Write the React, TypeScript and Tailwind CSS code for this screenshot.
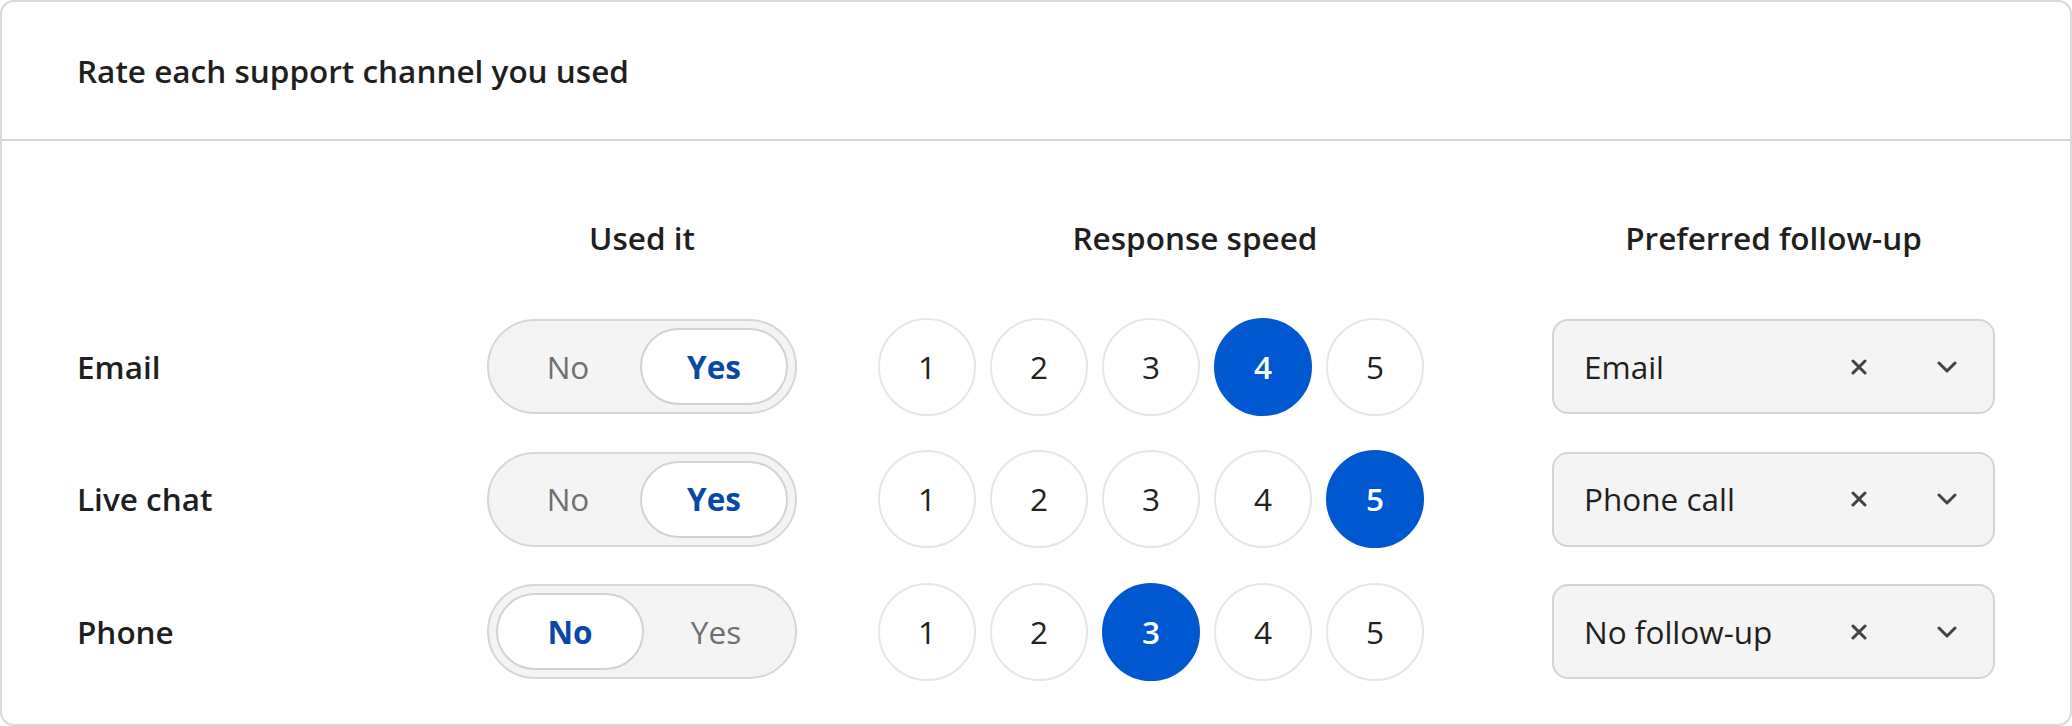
import React from "react";

type Row = { label: string; used: boolean; speed: number; follow: string };

const rows: Row[] = [
  { label: "Email", used: true, speed: 4, follow: "Email" },
  { label: "Live chat", used: true, speed: 5, follow: "Phone call" },
  { label: "Phone", used: false, speed: 3, follow: "No follow-up" },
];

function Toggle({ used }: { used: boolean }) {
  const on = "flex-1 h-full rounded-full bg-white border-2 border-[#d2d2d2] flex items-center justify-center font-bold text-[#0a48a8]";
  const off = "flex-1 h-full flex items-center justify-center text-[#6f6f6f]";
  return (
    <div className="w-[310px] h-[95px] rounded-full border-2 border-[#d6d6d6] bg-[#f4f4f4] p-[7px] flex items-center">
      <div className={used ? off : on}>No</div>
      <div className={used ? on : off}>Yes</div>
    </div>
  );
}

function Speed({ value }: { value: number }) {
  return (
    <div className="flex items-center gap-[14px]">
      {[1, 2, 3, 4, 5].map((n) =>
        n === value ? (
          <div
            key={n}
            className="w-[98px] h-[98px] rounded-full bg-[#0058d0] border-2 border-[#0058d0] text-white font-semibold flex items-center justify-center"
          >
            {n}
          </div>
        ) : (
          <div
            key={n}
            className="w-[98px] h-[98px] rounded-full bg-white border-2 border-[#e6e6e6] text-[#222222] flex items-center justify-center"
          >
            {n}
          </div>
        )
      )}
    </div>
  );
}

function Select({ value }: { value: string }) {
  return (
    <div className="w-full h-[95px] rounded-[16px] border-2 border-[#d4d4d4] bg-[#f4f4f4] flex items-center pl-[30px] pr-[24px]">
      <span className="flex-1 text-[#1f1f1f]">{value}</span>
      <div className="flex items-center gap-[44px]">
        <span className="w-[44px] h-[44px] flex items-center justify-center">
          <svg width="16" height="16" viewBox="0 0 16 16">
            <path d="M2 2L14 14M14 2L2 14" stroke="#424242" strokeWidth="3" strokeLinecap="round" />
          </svg>
        </span>
        <span className="w-[44px] h-[44px] flex items-center justify-center">
          <svg width="20" height="12" viewBox="0 0 20 12">
            <path d="M2 2L10 10L18 2" stroke="#424242" strokeWidth="3" fill="none" strokeLinecap="round" strokeLinejoin="round" />
          </svg>
        </span>
      </div>
    </div>
  );
}

export default function App() {
  return (
    <div
      className="w-[2072px] h-[726px] bg-white text-[31.5px] leading-[40px] text-[#1f1f1f]"
      style={{ fontFamily: '"Open Sans", "Noto Sans", sans-serif' }}
    >
      <div className="w-full h-full rounded-[14px] border-2 border-[#d8d8d8] overflow-hidden flex flex-col">
        <div className="h-[139px] border-b-2 border-[#d6d6d6] flex items-center px-[75px] shrink-0">
          <h1 className="font-semibold">Rate each support channel you used</h1>
        </div>
        <div className="px-[75px] pt-[77px] flex flex-col">
          <div className="grid grid-cols-[329px_392px_634px_443px] gap-x-[40px] font-semibold mb-[61px]">
            <div />
            <div className="text-center">Used it</div>
            <div className="text-center">Response speed</div>
            <div className="text-center">Preferred follow-up</div>
          </div>
          <div className="grid grid-cols-[329px_392px_634px_443px] gap-x-[40px] gap-y-[37.5px]">
            {rows.map((r) => (
              <React.Fragment key={r.label}>
                <div className="h-[95px] flex items-center font-semibold">{r.label}</div>
                <div className="h-[95px] flex items-center justify-center">
                  <Toggle used={r.used} />
                </div>
                <div className="h-[95px] flex items-center">
                  <Speed value={r.speed} />
                </div>
                <div className="h-[95px] flex items-center">
                  <Select value={r.follow} />
                </div>
              </React.Fragment>
            ))}
          </div>
        </div>
      </div>
    </div>
  );
}
